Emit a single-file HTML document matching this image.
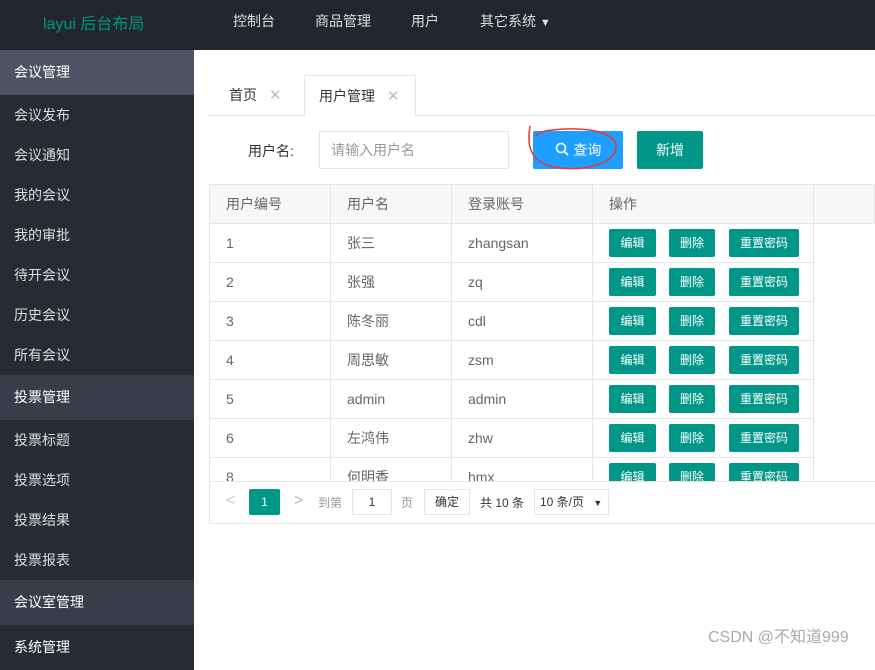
<!DOCTYPE html>
<html><head><meta charset="utf-8"><style>
*{margin:0;padding:0;box-sizing:border-box}
body{width:875px;height:651px;overflow:hidden;background:#fff;font-family:"Liberation Sans","Noto Sans CJK SC",sans-serif;font-size:14px;color:#666;position:relative}
.hd{position:absolute;left:0;top:0;width:875px;height:50px;background:#23262e}
.logo{position:absolute;left:43px;top:10px;color:#009688;font-size:16px}
.nav{position:absolute;top:11px;color:#ddd;font-size:14px}
.side{position:absolute;left:0;top:50px;width:194px;height:601px;background:#282b33}
.side div{height:40px;line-height:40px;padding-left:14px;color:#ddd;font-size:14px}
.side .g{height:45px;line-height:45px;background:#393d49;color:#fff}
.side .g.a{background:#4e5263}
.abs{position:absolute}
.tab{position:absolute;top:75px;height:41px;line-height:40px;color:#333;font-size:14px}
.x{color:#bbb;margin-left:12px;font-size:15px}
table{border-collapse:collapse;width:666px}
td,th{border:1px solid #e6e6e6;height:39px;padding-left:16px;text-align:left;font-weight:normal;color:#666;font-size:14px}
th{background:#f7f7f7;height:39px}
.b{display:inline-block;height:28px;line-height:28px;background:#009688;color:#fff;font-size:12px;text-align:center;border-radius:2px;vertical-align:middle}
.wrap{position:absolute;left:209px;top:184px;width:666px;height:297px;overflow:hidden}
</style></head><body>
<div class="hd"></div>
<div class="logo">layui 后台布局</div>
<div class="nav" style="left:233px">控制台</div>
<div class="nav" style="left:315px">商品管理</div>
<div class="nav" style="left:411px">用户</div>
<div class="nav" style="left:480px">其它系统 <span style="font-size:11px">▼</span></div>
<div class="side">
<div class="g a">会议管理</div><div>会议发布</div><div>会议通知</div><div>我的会议</div><div>我的审批</div><div>待开会议</div><div>历史会议</div><div>所有会议</div>
<div class="g">投票管理</div><div>投票标题</div><div>投票选项</div><div>投票结果</div><div>投票报表</div>
<div class="g">会议室管理</div><div class="g" style="background:#282b33">系统管理</div>
</div>
<div class="abs" style="left:209px;top:115px;width:666px;height:1px;background:#e6e6e6"></div>
<div class="tab" style="left:229px">首页<span class="x">✕</span></div>
<div class="tab" style="left:304px;width:112px;border:1px solid #e6e6e6;border-bottom:1px solid #fff;background:#fff;padding-left:14px">用户管理<span class="x">✕</span></div>
<div class="abs" style="left:248px;top:141px;color:#333">用户名:</div>
<div class="abs" style="left:319px;top:131px;width:190px;height:38px;border:1px solid #e6e6e6;padding-left:11px;line-height:36px;color:#999">请输入用户名</div>
<div class="abs" style="left:533px;top:131px;width:90px;height:38px;background:#1e9fff;color:#fff;line-height:38px;text-align:center;border-radius:2px">
<svg width="15" height="15" viewBox="0 0 15 15" style="vertical-align:-2px"><circle cx="6" cy="6" r="4.5" fill="none" stroke="#fff" stroke-width="1.6"/><path d="M9.3 9.3L13 13" stroke="#fff" stroke-width="1.8"/></svg> 查询</div>
<svg class="abs" style="left:524px;top:124px" width="96" height="48"><path d="M6 2 C3 20 5 38 30 43 C60 48 90 40 92 24 C94 10 70 4 40 5 C25 6 14 7 12 12" fill="none" stroke="#e33" stroke-width="1.5"/></svg>
<div class="abs" style="left:637px;top:131px;width:66px;height:38px;background:#009688;color:#fff;line-height:38px;text-align:center;border-radius:2px">新增</div>
<div class="wrap"><table>
<tr><th style="width:121px">用户编号</th><th style="width:121px">用户名</th><th style="width:141px">登录账号</th><th style="width:221px">操作</th><th></th></tr>
<tr><td>1</td><td>张三</td><td>zhangsan</td><td><span class="b" style="width:47px">编辑</span><span class="b" style="width:46px;margin-left:13px">删除</span><span class="b" style="width:70px;margin-left:14px">重置密码</span></td><td style="border:none"></td></tr>
<tr><td>2</td><td>张强</td><td>zq</td><td><span class="b" style="width:47px">编辑</span><span class="b" style="width:46px;margin-left:13px">删除</span><span class="b" style="width:70px;margin-left:14px">重置密码</span></td><td style="border:none"></td></tr>
<tr><td>3</td><td>陈冬丽</td><td>cdl</td><td><span class="b" style="width:47px">编辑</span><span class="b" style="width:46px;margin-left:13px">删除</span><span class="b" style="width:70px;margin-left:14px">重置密码</span></td><td style="border:none"></td></tr>
<tr><td>4</td><td>周思敏</td><td>zsm</td><td><span class="b" style="width:47px">编辑</span><span class="b" style="width:46px;margin-left:13px">删除</span><span class="b" style="width:70px;margin-left:14px">重置密码</span></td><td style="border:none"></td></tr>
<tr><td>5</td><td>admin</td><td>admin</td><td><span class="b" style="width:47px">编辑</span><span class="b" style="width:46px;margin-left:13px">删除</span><span class="b" style="width:70px;margin-left:14px">重置密码</span></td><td style="border:none"></td></tr>
<tr><td>6</td><td>左鸿伟</td><td>zhw</td><td><span class="b" style="width:47px">编辑</span><span class="b" style="width:46px;margin-left:13px">删除</span><span class="b" style="width:70px;margin-left:14px">重置密码</span></td><td style="border:none"></td></tr>
<tr><td>8</td><td>何明香</td><td>hmx</td><td><span class="b" style="width:47px">编辑</span><span class="b" style="width:46px;margin-left:13px">删除</span><span class="b" style="width:70px;margin-left:14px">重置密码</span></td><td style="border:none"></td></tr>
</table></div>
<div class="abs" style="left:209px;top:481px;width:666px;height:43px;border:1px solid #e6e6e6;border-right:none;background:#fff"></div>
<div class="abs" style="left:226px;top:492px;color:#ccc;font-size:16px">&lt;</div>
<div class="abs" style="left:249px;top:489px;width:31px;height:26px;background:#009688;color:#fff;text-align:center;line-height:26px;font-size:12px;border-radius:2px">1</div>
<div class="abs" style="left:294px;top:492px;color:#bbb;font-size:16px">&gt;</div>
<div class="abs" style="left:318px;top:494px;color:#999;font-size:12px">到第</div>
<div class="abs" style="left:352px;top:489px;width:40px;height:26px;border:1px solid #e6e6e6;text-align:center;line-height:24px;color:#333;font-size:12px">1</div>
<div class="abs" style="left:401px;top:494px;color:#999;font-size:12px">页</div>
<div class="abs" style="left:424px;top:489px;width:46px;height:26px;border:1px solid #e6e6e6;text-align:center;line-height:24px;color:#333;font-size:12px">确定</div>
<div class="abs" style="left:480px;top:494px;color:#333;font-size:12px">共 10 条</div>
<div class="abs" style="left:534px;top:489px;width:75px;height:26px;border:1px solid #e6e6e6;line-height:24px;padding-left:5px;color:#333;font-size:12px">10 条/页 <span style="font-size:9px;margin-left:6px">▼</span></div>
<div class="abs" style="left:708px;top:623px;color:#aaa;font-size:16px">CSDN @不知道999</div>
</body></html>
